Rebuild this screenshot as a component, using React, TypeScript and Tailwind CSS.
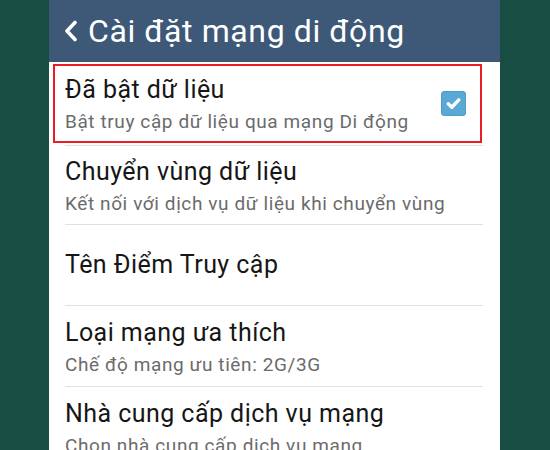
import React from "react";

type Item = {
  title: string;
  subtitle?: string;
  height: string;
  checked?: boolean;
  highlight?: boolean;
};

const items: Item[] = [
  {
    title: "Đã bật dữ liệu",
    subtitle: "Bật truy cập dữ liệu qua mạng Di động",
    height: "h-[83px]",
    checked: true,
    highlight: true,
  },
  {
    title: "Chuyển vùng dữ liệu",
    subtitle: "Kết nối với dịch vụ dữ liệu khi chuyển vùng",
    height: "h-[78px]",
  },
  { title: "Tên Điểm Truy cập", height: "h-[80px]" },
  {
    title: "Loại mạng ưa thích",
    subtitle: "Chế độ mạng ưu tiên: 2G/3G",
    height: "h-[80px]",
  },
  {
    title: "Nhà cung cấp dịch vụ mạng",
    subtitle: "Chọn nhà cung cấp dịch vụ mạng",
    height: "h-[80px]",
  },
];

function Row({ item }: { item: Item }) {
  return (
    <div className="flex flex-col">
      <div className={`relative flex items-center pl-[16px] pr-[34px] ${item.height}`}>
        <div className={`flex flex-1 flex-col ${item.subtitle ? "pt-[3px]" : ""}`}>
          <div className="text-[25px] leading-[28px] tracking-[0.45px] text-[#161616]">
            {item.title}
          </div>
          {item.subtitle && (
            <div className="mt-[6px] whitespace-nowrap text-[19px] leading-[24px] tracking-[0.6px] text-[#6b6b6b]">
              {item.subtitle}
            </div>
          )}
        </div>
        {item.checked && (
          <div className="flex h-[25px] w-[25px] items-center justify-center rounded-[3px] border border-[#4f9cc9] bg-[#5aa8d5]">
            <svg width="17" height="17" viewBox="0 0 16 16" fill="none">
              <path
                d="M3 8.3 L6.4 11.5 L13 4.6"
                stroke="white"
                strokeWidth="3.2"
                strokeLinecap="round"
                strokeLinejoin="round"
              />
            </svg>
          </div>
        )}
        {item.highlight && (
          <div className="absolute left-[4px] top-[2px] h-[79px] w-[429px] border-2 border-[#ec1c24]" />
        )}
      </div>
      <div className="ml-[16px] mr-[17px] h-px bg-[#e0e0e0]" />
    </div>
  );
}

export default function App() {
  return (
    <div
      className="flex h-[450px] w-[550px] overflow-hidden bg-[#174d42] pl-[49px]"
      style={{ fontFamily: "Roboto, 'Noto Sans', sans-serif" }}
    >
      <div className="flex w-[451px] flex-col bg-white">
        <div className="flex h-[62px] shrink-0 items-center bg-[#3e5878] pl-[15px]">
          <svg width="14" height="22" viewBox="0 0 14 22" fill="none" className="mb-[1px]">
            <path
              d="M11 2.5 L3 11 L11 19.5"
              stroke="white"
              strokeWidth="3.6"
              strokeLinecap="round"
              strokeLinejoin="round"
            />
          </svg>
          <span className="ml-[10px] text-[32px] leading-none tracking-[0.6px] text-white">
            Cài đặt mạng di động
          </span>
        </div>
        <div className="h-px bg-[#d8dde3]" />
        {items.map((item) => (
          <Row key={item.title} item={item} />
        ))}
      </div>
    </div>
  );
}
